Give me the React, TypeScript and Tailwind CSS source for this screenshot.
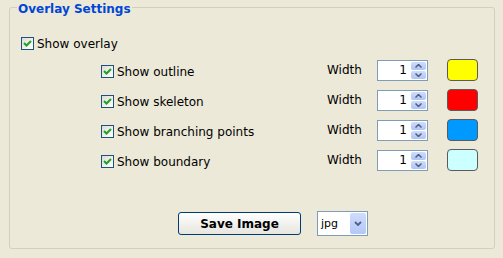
import React from 'react';

const ROWS = [
  { label: 'Show outline', color: 'bg-[#ffff00]' },
  { label: 'Show skeleton', color: 'bg-[#ff0000]' },
  { label: 'Show branching points', color: 'bg-[#0099ff]' },
  { label: 'Show boundary', color: 'bg-[#ccffff]' },
];

const CheckBox: React.FC = () => (
  <div className="flex h-[13px] w-[13px] shrink-0 items-center justify-center border border-[#1c5180] bg-gradient-to-br from-[#dcdcd7] to-white">
    <svg width="9" height="9" viewBox="0 0 9 9">
      <path d="M1 4 L3.5 6.5 L8 2" fill="none" stroke="#21a121" strokeWidth="2" />
    </svg>
  </div>
);

const Arrow: React.FC<{ up?: boolean }> = ({ up }) => (
  <svg width="7" height="4" viewBox="0 0 7 4">
    <path d={up ? 'M0.5 3.5 L3.5 0.5 L6.5 3.5' : 'M0.5 0.5 L3.5 3.5 L6.5 0.5'} fill="none" stroke="#4d6185" strokeWidth="1.5" />
  </svg>
);

const Spinner: React.FC = () => (
  <div className="flex h-[21px] w-[51px] items-stretch border border-[#7f9db9] bg-white p-[1px]">
    <div className="flex flex-1 items-center justify-end pr-[4px] text-[12px] leading-none">1</div>
    <div className="flex w-[15px] flex-col gap-[1px]">
      <div className="flex flex-1 items-center justify-center rounded-[2px] bg-gradient-to-b from-[#d0dcfb] to-[#b0c4f3]">
        <Arrow up />
      </div>
      <div className="flex flex-1 items-center justify-center rounded-[2px] bg-gradient-to-b from-[#d0dcfb] to-[#b0c4f3]">
        <Arrow />
      </div>
    </div>
  </div>
);

export default function App() {
  return (
    <div className="h-[258px] w-[503px] overflow-hidden bg-[#ece9d8] pt-[7px] text-[12px] text-black [font-family:'DejaVu_Sans',sans-serif]">
      <div className="relative ml-[9px] h-[242px] w-[486px] rounded-[3px] border border-[#d0d0bf]">
        <div className="absolute left-[7px] top-[-6px] bg-[#ece9d8] px-[1px] text-[12px] font-bold leading-[14px] text-[#0046d5]">
          Overlay Settings
        </div>

        <div className="flex h-[13px] items-center gap-[3px] pl-[11px] mt-[29px]">
          <CheckBox />
          <span className="leading-none">Show overlay</span>
        </div>

        <div className="mt-[5px] flex flex-col pl-[91px]">
          {ROWS.map((r) => (
            <div key={r.label} className="flex h-[30px] items-center">
              <div className="flex w-[226px] items-center gap-[3px] pt-[3px]">
                <CheckBox />
                <span className="leading-none">{r.label}</span>
              </div>
              <span className="w-[50px] leading-none">Width</span>
              <Spinner />
              <div className={`ml-[19px] h-[22px] w-[31px] rounded-[4px] border border-[#5a5a5a] ${r.color}`} />
            </div>
          ))}
        </div>

        <div className="mt-[36px] flex items-center pl-[168px]">
          <button className="h-[23px] w-[123px] rounded-[3px] border border-[#003c74] bg-gradient-to-b from-white to-[#e6e5de] text-[12px] font-bold leading-none">
            Save Image
          </button>
          <div className="ml-[16px] flex h-[25px] w-[51px] items-stretch border border-[#7f9db9] bg-white p-[1px]">
            <div className="flex flex-1 items-center pl-[2px] text-[11px] leading-none">jpg</div>
            <div className="flex w-[16px] items-center justify-center rounded-[2px] bg-gradient-to-b from-[#cfdcfc] to-[#b4c8f6]">
              <svg width="8" height="5" viewBox="0 0 8 5">
                <path d="M1 1 L4 4 L7 1" fill="none" stroke="#4d6185" strokeWidth="1.8" />
              </svg>
            </div>
          </div>
        </div>
      </div>
    </div>
  );
}
